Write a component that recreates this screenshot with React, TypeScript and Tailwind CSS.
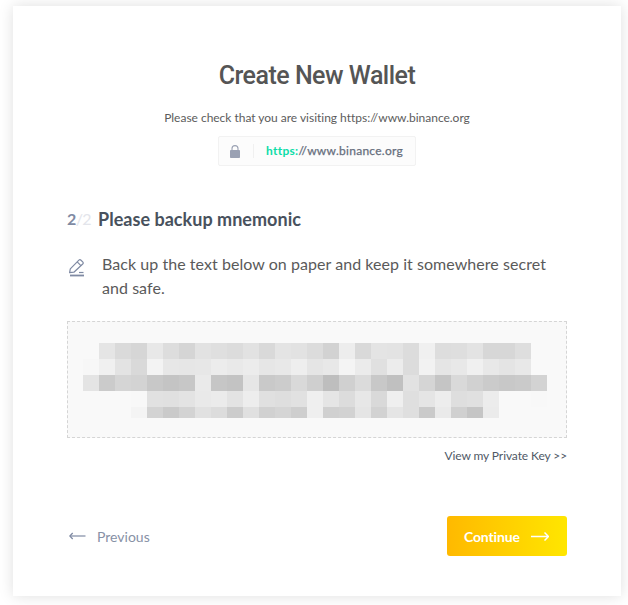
import React from "react";

// Grey level of each mosaic cell, one two-digit hex per cell; ".." leaves it empty.
const ROWS = [
  ".. e5 da d6 e8 dd d5 e2 df dc e2 d9 e4 e2 dc d2 ed d9 e4 e3 dc f0 dd de e3 d7 d7 de ..",
  "f7 f0 e3 d9 f3 e7 e6 e7 ec e9 ec e6 e8 ee e5 e8 f4 eb e0 ec dc f2 e5 e8 f0 e8 e4 e8 ..",
  "e4 cb d5 d3 c8 c4 c7 ea c6 c3 e6 c9 cc d9 cf be d0 db c8 c0 e2 d5 c5 d9 d1 cb c8 ca d3",
  ".. .. .. f8 e1 e0 e3 e9 eb e3 ed e0 de e1 ef e5 dc e7 d9 ef df e5 ed de e0 ec .. .. f8",
  ".. .. .. f4 d3 ca d3 e1 dc cc e0 d1 d5 ce ef d0 d2 e5 d2 e5 df ca ea d0 c5 eb .. .. ..",
].map((row) => row.split(" "));

function Mosaic() {
  return (
    <div className="grid w-[464px] grid-cols-[repeat(29,16px)] grid-rows-[16px_16px_16px_16px_11px]">
      {ROWS.flatMap((row, r) =>
        row.map((v, c) => (
          <div key={`${r}-${c}`} style={{ backgroundColor: v === ".." ? "transparent" : `#${v}${v}${v}` }} />
        )),
      )}
    </div>
  );
}

function LockIcon() {
  return (
    <svg width="10" height="13" viewBox="0 0 10 13" fill="none">
      <path d="M2 6V3.6a3 3 0 0 1 6 0V6" stroke="#9aa1b3" strokeWidth="1.1" />
      <rect x="0" y="5" width="10" height="8" rx="0.8" fill="#9aa1b3" />
    </svg>
  );
}

function PenIcon() {
  return (
    <svg width="16" height="18" viewBox="0 0 16 18" fill="none" stroke="#7f8aa3" strokeWidth="1.2" strokeLinejoin="round">
      <path d="M.6 13.700l.7-3.900L9.900 1.200a1.500 1.500 0 0 1 2.100 0l1.700 1.700a1.500 1.500 0 0 1 0 2.100L4.900 13.200z" />
      <path d="M8.200 2.900l3.700 3.700" />
      <path d="M10 13.500H14.500" />
      <path d="M1 16.500H15" strokeWidth="1.800" />
    </svg>
  );
}

export default function App() {
  return (
    <div className="flex h-[605px] w-[628px] overflow-hidden bg-white pl-[13px] pt-[6px] font-['Lato','Open_Sans',sans-serif]">
      <main className="flex h-[590px] w-[608px] shrink-0 flex-col bg-white px-[54px] shadow-[0_0_14px_rgba(0,0,0,0.13)]">
        <h1 className="mt-[54px] text-center font-['Roboto',sans-serif] text-[25px] font-medium leading-8 tracking-[-0.5px] whitespace-nowrap text-[#555]">
          Create New Wallet
        </h1>
        <p className="mt-[18px] text-center text-[12px] leading-4 tracking-[-0.02px] whitespace-nowrap text-[#5c5c5c]">
          Please check that you are visiting https://www.binance.org
        </p>
        <div className="mt-[10px] flex h-[30px] w-[198px] items-center self-center rounded-[2px] border border-[#f2f2f2] bg-[#fcfcfc] pl-[11px]">
          <LockIcon />
          <span className="ml-[13px] h-[14px] w-px bg-[#f0f0f0]" />
          <span className="ml-[12px] text-[12px] leading-4 tracking-[0.27px] whitespace-nowrap text-[#666e7c] [-webkit-text-stroke:0.25px_#666e7c]">
            <span className="font-bold text-[#0bdca8] [-webkit-text-stroke:0px]">https:</span>//www.binance.org
          </span>
        </div>

        <h2 className="mt-[41px] flex h-6 items-center text-[18px] font-bold tracking-[0.03px] whitespace-nowrap text-[#48515d]">
          <span className="w-[31px] text-[16px] tracking-[-0.6px] text-[#7f8aa3]">
            2<span className="font-normal text-[#e3e5eb]">/2</span>
          </span>
          <span>Please backup mnemonic</span>
        </h2>

        <div className="mt-[21px] flex">
          <div className="w-[35px] pl-[2px] pt-[7px]">
            <PenIcon />
          </div>
          <p className="text-[16px] leading-6 tracking-[0.05px] whitespace-nowrap text-[#5a5a5a]">
            Back up the text below on paper and keep it somewhere secret
            <br />
            and safe.
          </p>
        </div>

        <div className="mt-[21px] h-[117px] w-[500px] shrink-0 border border-dashed border-[#d5d5d5] bg-[#f9f9f9] pl-[15px] pt-[21px]">
          <Mosaic />
        </div>
        <a className="mt-[10px] self-end text-[12px] leading-4 tracking-[-0.1px] whitespace-nowrap text-[#4f5966]">View my Private Key &gt;&gt;</a>

        <div className="mt-[52px] flex h-10 items-center justify-between">
          <button className="flex items-center text-[14px] whitespace-nowrap text-[#8791a6]">
            <svg width="17" height="8" viewBox="0 0 17 8" className="ml-[2px] mr-[11px]" fill="none" stroke="#7f8aa3">
              <path d="M1 4h15.500" strokeWidth="1.200" />
              <path d="M3.700 1L.8 4l2.900 3" strokeWidth="1.300" />
            </svg>
            Previous
          </button>
          <button className="flex h-10 w-[120px] items-center rounded-[3px] bg-linear-to-r from-[#ffb900] to-[#ffe600] pl-[17px] text-[14px] font-bold tracking-[-0.15px] whitespace-nowrap text-white">
            <span className="w-[67px] text-left">Continue</span>
            <svg width="18" height="10" viewBox="0 0 18 10" fill="none" stroke="white" strokeWidth="1.500">
              <path d="M0 5.500h17M13.500 1.500l4 4-4 4" />
            </svg>
          </button>
        </div>
      </main>
    </div>
  );
}
